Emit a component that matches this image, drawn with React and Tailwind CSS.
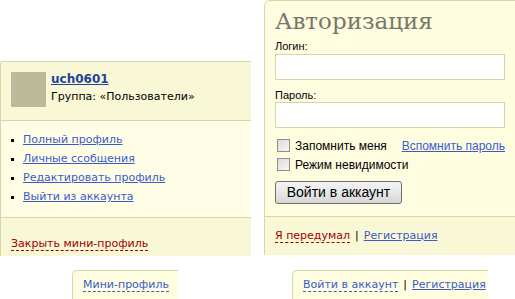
import React from 'react';

const font = { fontFamily: '"DejaVu Sans", Verdana, sans-serif' };
const arial = { fontFamily: '"Liberation Sans", Arial, sans-serif' };

function Checkbox() {
  return (
    <span className="inline-block w-[13px] h-[13px] border border-[#8e8f8f] bg-gradient-to-br from-[#dcdcd7] to-[#f6f6f3] shrink-0" />
  );
}

function MiniProfile() {
  return (
    <div className="mt-[61px] w-[251px] shrink-0 border-t border-l border-[#d8d6a6] rounded-tl-[3px] overflow-hidden">
      <div className="bg-[#f8f7d6] h-[59px] border-b border-[#d8d6a6] flex pt-[10px] pl-[10px]">
        <div className="w-[35px] h-[35px] bg-[#bbbb9b] shrink-0" />
        <div className="ml-[5px] leading-[16px]">
          <a href="#" className="block text-[12px] font-bold text-[#23439c] underline mt-[-1px]">uch0601</a>
          <div className="text-[11px] text-black mt-[2px]">Группа: «Пользователи»</div>
        </div>
      </div>
      <ul className="bg-[#fffde5] h-[97px] border-b border-[#d8d6a6] pt-[10px] pl-[10px]">
        {['Полный профиль', 'Личные ссобщения', 'Редактировать профиль', 'Выйти из аккаунта'].map((t) => (
          <li key={t} className="flex items-center h-[19px]">
            <span className="w-[3px] h-[3px] bg-black mr-[9px]" />
            <a href="#" className="text-[11px] text-[#3a5bcc] underline">{t}</a>
          </li>
        ))}
      </ul>
      <div className="bg-[#f8f7d6] h-[38px] pl-[10px] pt-[12px]">
        <a href="#" className="text-[11px] text-[#a00000] border-b border-dashed border-[#a00000] leading-[14px]">Закрыть мини-профиль</a>
      </div>
    </div>
  );
}

function LoginBox() {
  return (
    <div className="w-[265px] shrink-0 border-t border-l border-[#d8d6a6] rounded-tl-[6px] overflow-hidden">
      <div className="bg-[#fffde0] h-[216px] border-b border-[#d8d6a6] pl-[10px] pr-[10px]">
        <h2 className="text-[23px] leading-[28px] pt-[6px] text-[#78786a]" style={{ fontFamily: '"DejaVu Serif", Georgia, serif' }}>
          Авторизация
        </h2>
        <div className="text-[11px] leading-[12px] text-black mt-[5px]" style={arial}>Логин:</div>
        <div className="w-[230px] h-[26px] border border-[#d6d4a8] bg-white mt-[2px]" />
        <div className="text-[11px] leading-[12px] text-black mt-[9px]" style={arial}>Пароль:</div>
        <div className="w-[230px] h-[26px] border border-[#d6d4a8] bg-white mt-[1px]" />
        <div className="w-[230px] flex items-center justify-between mt-[11px] pl-[2px] h-[13px] text-[12px]" style={arial}>
          <label className="flex items-center gap-[5px] text-black">
            <Checkbox />
            Запомнить меня
          </label>
          <a href="#" className="text-[#3a5bcc] underline">Вспомнить пароль</a>
        </div>
        <label className="flex items-center gap-[5px] text-[12px] text-black mt-[6px] pl-[2px] h-[13px]" style={arial}>
          <Checkbox />
          Режим невидимости
        </label>
        <button className="mt-[10px] w-[127px] h-[23px] border border-[#707070] rounded-[3px] bg-gradient-to-b from-[#f3f3f3] via-[#e8e8e8] to-[#d6d6d6] text-[14px] text-black" style={arial}>
          Войти в аккаунт
        </button>
      </div>
      <div className="bg-[#f8f7d6] h-[38px] pl-[10px] pt-[12px] text-[11px] leading-[14px]">
        <a href="#" className="text-[#a00000] border-b border-dashed border-[#a00000]">Я передумал</a>
        <span className="text-black mx-[5px]">|</span>
        <a href="#" className="text-[#3a5bcc] underline">Регистрация</a>
      </div>
    </div>
  );
}

export default function App() {
  return (
    <div className="w-[515px] h-[299px] bg-white overflow-hidden" style={font}>
      <div className="flex items-start gap-[13px]">
        <MiniProfile />
        <LoginBox />
      </div>
      <div className="flex mt-[14px] text-[11px] leading-[14px]">
        <div className="ml-[72px] w-[106px] h-[40px] border-t border-l border-[#d8d6a6] rounded-tl-[5px] bg-[#fffde0] pl-[10px] pt-[7px]">
          <a href="#" className="text-[#3a5bcc] border-b border-dashed border-[#3a5bcc]">Мини-профиль</a>
        </div>
        <div className="ml-[114px] w-[196px] h-[40px] border-t border-l border-[#d8d6a6] rounded-tl-[5px] bg-[#fffde0] pl-[10px] pt-[7px]">
          <a href="#" className="text-[#3a5bcc] border-b border-dashed border-[#3a5bcc]">Войти в аккаунт</a>
          <span className="text-black mx-[5px]">|</span>
          <a href="#" className="text-[#3a5bcc] underline">Регистрация</a>
        </div>
      </div>
    </div>
  );
}
